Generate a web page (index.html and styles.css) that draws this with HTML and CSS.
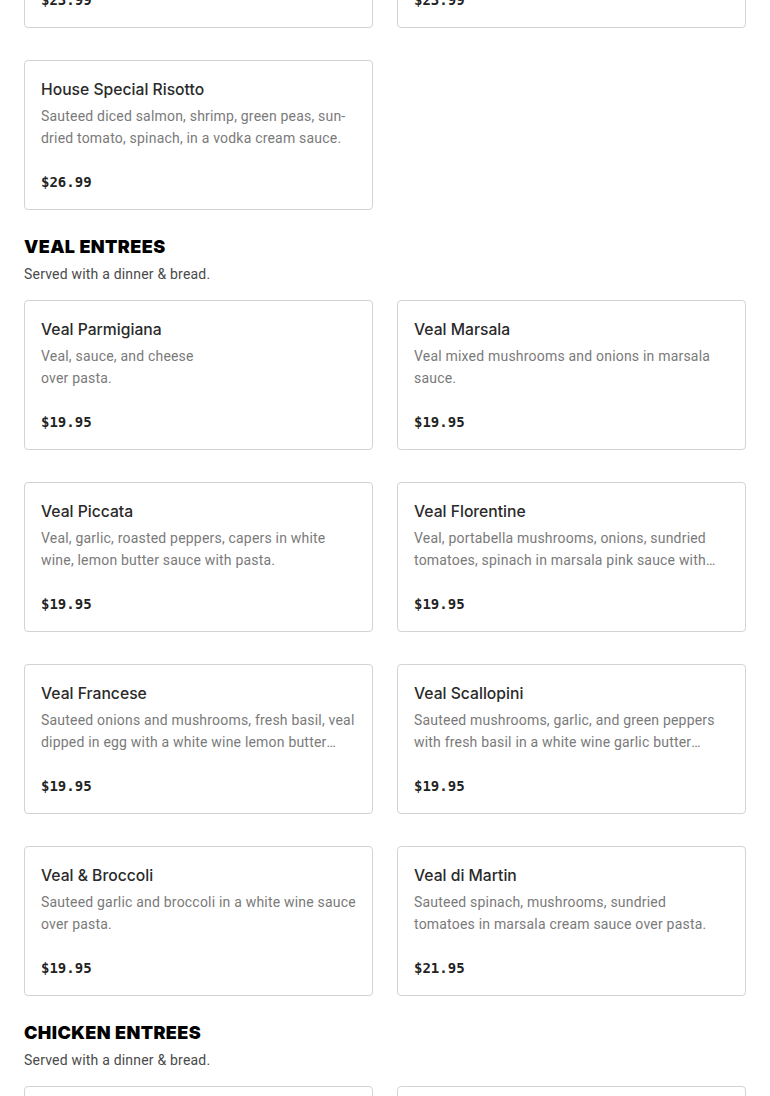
FILE: index.html
```html
<!DOCTYPE html>
<html lang="en">
<head>
<meta charset="utf-8">
<title>Menu</title>
<link rel="stylesheet" href="styles.css">
</head>
<body>
<main class="menu">
  <section class="section section-scrolled">
    <div class="grid">
      <article class="card">
        <h3 class="card-title">Seafood Risotto</h3>
        <p class="card-desc">Shrimp, scallops, and calamari in a light tomato sauce with fresh herbs.</p>
        <p class="card-price">$23.99</p>
      </article>
      <article class="card">
        <h3 class="card-title">Lobster Risotto</h3>
        <p class="card-desc">Lobster meat, asparagus and mushrooms in a creamy parmesan sauce.</p>
        <p class="card-price">$23.99</p>
      </article>
      <article class="card">
        <h3 class="card-title">House Special Risotto</h3>
        <p class="card-desc">Sauteed diced salmon, shrimp, green peas, sun-dried tomato, spinach, in a vodka cream sauce.</p>
        <p class="card-price">$26.99</p>
      </article>
    </div>
  </section>

  <section class="section">
    <h2 class="section-title">VEAL ENTREES</h2>
    <p class="section-sub">Served with a dinner &amp; bread.</p>
    <div class="grid">
      <article class="card">
        <h3 class="card-title">Veal Parmigiana</h3>
        <p class="card-desc">Veal, sauce, and cheese<br>over pasta.</p>
        <p class="card-price">$19.95</p>
      </article>
      <article class="card">
        <h3 class="card-title">Veal Marsala</h3>
        <p class="card-desc">Veal mixed mushrooms and onions in marsala sauce.</p>
        <p class="card-price">$19.95</p>
      </article>
      <article class="card">
        <h3 class="card-title">Veal Piccata</h3>
        <p class="card-desc">Veal, garlic, roasted peppers, capers in white wine, lemon butter sauce with pasta.</p>
        <p class="card-price">$19.95</p>
      </article>
      <article class="card">
        <h3 class="card-title">Veal Florentine</h3>
        <p class="card-desc">Veal, portabella mushrooms, onions, sundried tomatoes, spinach in marsala pink sauce with pasta.</p>
        <p class="card-price">$19.95</p>
      </article>
      <article class="card">
        <h3 class="card-title">Veal Francese</h3>
        <p class="card-desc">Sauteed onions and mushrooms, fresh basil, veal dipped in egg with a white wine lemon butter sauce over pasta.</p>
        <p class="card-price">$19.95</p>
      </article>
      <article class="card">
        <h3 class="card-title">Veal Scallopini</h3>
        <p class="card-desc">Sauteed mushrooms, garlic, and green peppers with fresh basil in a white wine garlic butter sauce over pasta.</p>
        <p class="card-price">$19.95</p>
      </article>
      <article class="card">
        <h3 class="card-title">Veal &amp; Broccoli</h3>
        <p class="card-desc">Sauteed garlic and broccoli in a white wine sauce over pasta.</p>
        <p class="card-price">$19.95</p>
      </article>
      <article class="card">
        <h3 class="card-title">Veal di Martin</h3>
        <p class="card-desc">Sauteed spinach, mushrooms, sundried tomatoes in marsala cream sauce over pasta.</p>
        <p class="card-price">$21.95</p>
      </article>
    </div>
  </section>

  <section class="section">
    <h2 class="section-title">CHICKEN ENTREES</h2>
    <p class="section-sub">Served with a dinner &amp; bread.</p>
    <div class="grid">
      <article class="card">
        <h3 class="card-title">Chicken Parmigiana</h3>
        <p class="card-desc">Chicken, sauce, and cheese over pasta.</p>
        <p class="card-price">$17.95</p>
      </article>
      <article class="card">
        <h3 class="card-title">Chicken Marsala</h3>
        <p class="card-desc">Chicken mixed mushrooms and onions in marsala sauce.</p>
        <p class="card-price">$17.95</p>
      </article>
    </div>
  </section>
</main>
</body>
</html>
```

FILE: styles.css
```css
* { box-sizing: border-box; }

html, body {
  margin: 0;
  padding: 0;
  background: #ffffff;
}

body {
  font-family: "Inter", "Liberation Sans", sans-serif;
  color: #222222;
}

.menu {
  padding: 0 24px;
  margin-top: -122px;
}

.section {
  display: flex;
  flex-direction: column;
  margin-bottom: 25px;
}

.section-title {
  margin: 0;
  font-family: "Inter", "Liberation Sans", sans-serif;
  font-weight: 900;
  font-size: 18px;
  line-height: 24px;
  color: #000000;
  letter-spacing: 0.4px;
}

.section-sub {
  margin: 5px 0 16px;
  font-family: "Roboto", "Liberation Sans", sans-serif;
  font-size: 14px;
  line-height: 20px;
  letter-spacing: 0.2px;
  color: #4a4a4a;
}

.grid {
  display: grid;
  grid-template-columns: 1fr 1fr;
  column-gap: 24px;
  row-gap: 32px;
}

.card {
  border: 1px solid #d3d3d3;
  border-radius: 4px;
  padding: 16px;
  display: flex;
  flex-direction: column;
  height: 150px;
}

.card-title {
  margin: 0;
  padding-top: 1px;
  font-size: 15.7px;
  line-height: 24px;
  font-weight: 500;
  color: #2a2a2a;
}

.card-desc {
  margin: 3px 0 0;
  font-family: "Roboto", "Liberation Sans", sans-serif;
  font-size: 14px;
  line-height: 22px;
  letter-spacing: 0.2px;
  color: #7a7a7a;
  height: 44px;
  display: -webkit-box;
  -webkit-line-clamp: 2;
  -webkit-box-orient: vertical;
  overflow: hidden;
}

.card-price {
  margin: 22px 0 0;
  font-family: "DejaVu Sans Mono", "Liberation Mono", monospace;
  font-weight: 700;
  font-size: 14px;
  line-height: 22px;
  color: #222222;
}
```
